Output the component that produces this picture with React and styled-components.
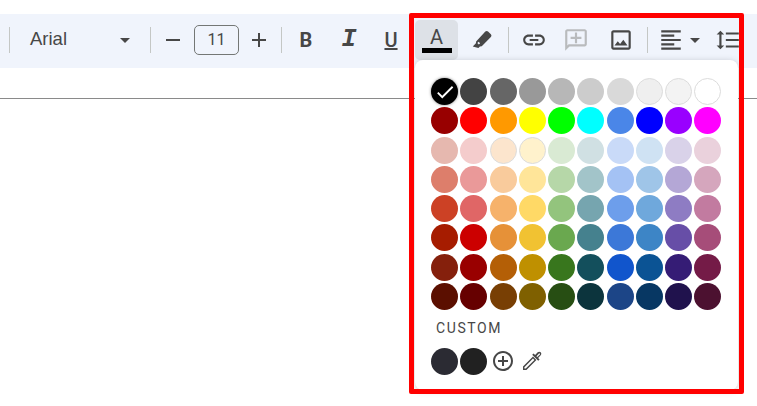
import React from 'react'
import styled, { createGlobalStyle } from 'styled-components'

const Global = createGlobalStyle`
  html, body {
    margin: 0;
    background: #fff;
    font-family: "Roboto", "Liberation Sans", sans-serif;
  }
`

const Page = styled.div`
  position: relative;
  width: 757px;
  height: 406px;
  padding-top: 14px;
  box-sizing: border-box;
  overflow: hidden;
`

const Toolbar = styled.div`
  display: flex;
  align-items: center;
  height: 54px;
  padding-bottom: 2px;
  box-sizing: border-box;
  background: #f0f4fc;
  color: #474747;
  overflow: hidden;
`

const Sep = styled.span`
  flex: none;
  width: 1px;
  height: 26px;
  background: #c4c7c5;
  margin-left: ${p => p.$left}px;
`

const FontName = styled.span`
  flex: none;
  width: 90px;
  margin: 0 0 2px 20px;
  font-family: "Liberation Sans", sans-serif;
  font-size: 18.5px;
`

const Caret = styled.span`
  flex: none;
  width: 0;
  height: 0;
  margin-left: ${p => p.$left}px;
  border-left: 5.5px solid transparent;
  border-right: 5.5px solid transparent;
  border-top: 5.5px solid #474747;
`

const Tool = styled.span`
  flex: none;
  display: flex;
  align-items: center;
  justify-content: center;
  margin-left: ${p => p.$left}px;
  color: ${p => (p.$muted ? '#b9bbbd' : '#474747')};
`

const SizeBox = styled.span`
  flex: none;
  width: 43px;
  height: 28px;
  margin-left: 9px;
  border: 1px solid #747775;
  border-radius: 5px;
  text-align: center;
  line-height: 28px;
  font-size: 16px;
`

const Letter = styled.span`
  flex: none;
  width: 24px;
  margin-left: ${p => p.$left}px;
  text-align: center;
  font-family: ${p => (p.$slab ? '"Liberation Mono", monospace' : '"Roboto", sans-serif')};
  font-size: ${p => (p.$slab ? 25 : 20)}px;
  font-weight: ${p => (p.$thin ? 500 : 700)};
  font-style: ${p => (p.$slab ? 'italic' : 'normal')};
  line-height: 24px;
  text-decoration: ${p => (p.$under ? 'underline' : 'none')};
`

const ColorButton = styled.span`
  flex: none;
  display: flex;
  flex-direction: column;
  align-items: center;
  width: 43px;
  height: 40px;
  margin-left: 12px;
  background: #dde1e7;
  border-radius: 5px;
  font-size: 20px;
  line-height: 22px;
  padding-top: 6px;
  box-sizing: border-box;
`

const ColorBar = styled.span`
  width: 30px;
  height: 5px;
  background: #000;
`

const Rule = styled.div`
  height: 1px;
  margin-top: 30px;
  background: #8a8a8a;
`

const Popup = styled.div`
  position: absolute;
  left: 415px;
  top: 60px;
  width: 323px;
  height: 330px;
  padding: 18px 0 0 16px;
  box-sizing: border-box;
  background: #fff;
  border-radius: 8px;
  box-shadow: 0 1px 6px rgba(60, 64, 67, 0.25);
`

const Palette = styled.div`
  display: grid;
  grid-template-columns: repeat(10, 27px);
  grid-auto-rows: 27px;
  gap: 2.25px;
`

const Swatch = styled.span`
  position: relative;
  display: flex;
  align-items: center;
  justify-content: center;
  border-radius: 50%;
  box-sizing: border-box;
  background: ${p => p.$color};
  border: ${p => (p.$edge ? '1px solid #dcdcdc' : 'none')};
  box-shadow: ${p => (p.$selected ? '0 0 3px rgba(0, 0, 0, 0.5)' : 'none')};
`

const CustomLabel = styled.div`
  margin: 10px 0 0 5px;
  font-size: 14px;
  font-weight: 400;
  letter-spacing: 1.6px;
  line-height: 16px;
  color: #474747;
`

const CustomRow = styled.div`
  display: flex;
  align-items: center;
  margin-top: 12px;
  color: #474747;
`

const CustomDot = styled.span`
  flex: none;
  width: 27px;
  height: 27px;
  margin-right: 2px;
  border-radius: 50%;
  background: ${p => p.$color};
`

const RowIcon = styled.span`
  flex: none;
  display: flex;
  margin-left: ${p => p.$left}px;
`

const Frame = styled.div`
  position: absolute;
  left: 409px;
  top: 13px;
  width: 335px;
  height: 381px;
  box-sizing: border-box;
  border: 5px solid #ff0000;
  border-radius: 2px;
`

const rows = [
  ['#000000', '#434343', '#666666', '#999999', '#b7b7b7', '#cccccc', '#d9d9d9', '#efefef', '#f3f3f3', '#ffffff'],
  ['#980000', '#ff0000', '#ff9900', '#ffff00', '#00ff00', '#00ffff', '#4a86e8', '#0000ff', '#9900ff', '#ff00ff'],
  ['#e6b8af', '#f4cccc', '#fce5cd', '#fff2cc', '#d9ead3', '#d0e0e3', '#c9daf8', '#cfe2f3', '#d9d2e9', '#ead1dc'],
  ['#dd7e6b', '#ea9999', '#f9cb9c', '#ffe599', '#b6d7a8', '#a2c4c9', '#a4c2f4', '#9fc5e8', '#b4a7d6', '#d5a6bd'],
  ['#cc4125', '#e06666', '#f6b26b', '#ffd966', '#93c47d', '#76a5af', '#6d9eeb', '#6fa8dc', '#8e7cc3', '#c27ba0'],
  ['#a61c00', '#cc0000', '#e69138', '#f1c232', '#6aa84f', '#45818e', '#3c78d8', '#3d85c6', '#674ea7', '#a64d79'],
  ['#85200c', '#990000', '#b45f06', '#bf9000', '#38761d', '#134f5c', '#1155cc', '#0b5394', '#351c75', '#741b47'],
  ['#5b0f00', '#660000', '#783f04', '#7f6000', '#274e13', '#0c343d', '#1c4587', '#073763', '#20124d', '#4c1130'],
]

const edged = ['#efefef', '#f3f3f3', '#ffffff', '#fce5cd', '#fff2cc']

const Icon = ({ size = 26, d, children }) => (
  <svg width={size} height={size} viewBox="0 0 24 24" fill="currentColor" fillRule="evenodd">
    {d && <path d={d} />}
    {children}
  </svg>
)

const paths = {
  minus: 'M5 11h14v2H5z',
  plus: 'M19 13h-6v6h-2v-6H5v-2h6V5h2v6h6z',
  // marker body with the white slit near its tip
  marker: 'M16 4.2c.7-.7 1.8-.7 2.5 0l2.6 2.6c.7.7.7 1.8 0 2.5l-8.4 8.4-1.7.2-1.4 1.4-5.2-1.4 2.9-2.9.2-1.7zM9.8 13.6l-1.2 1.2 1.4 1.4 1.2-1.2z',
  link: 'M3.9 12c0-1.71 1.39-3.1 3.1-3.1h4V7H7c-2.76 0-5 2.24-5 5s2.24 5 5 5h4v-1.9H7c-1.71 0-3.1-1.39-3.1-3.1zM8 13h8v-2H8v2zm9-6h-4v1.9h4c1.71 0 3.1 1.39 3.1 3.1s-1.39 3.1-3.1 3.1h-4V17h4c2.76 0 5-2.24 5-5s-2.24-5-5-5z',
  comment: 'M20 2H4c-1.1 0-2 .9-2 2v18l4-4h14c1.1 0 2-.9 2-2V4c0-1.1-.9-2-2-2zm0 14H5.17L4 17.17V4h16v12zM11 5h2v4h4v2h-4v4h-2v-4H7V9h4z',
  image: 'M19 5v14H5V5h14m0-2H5c-1.1 0-2 .9-2 2v14c0 1.1.9 2 2 2h14c1.1 0 2-.9 2-2V5c0-1.1-.9-2-2-2zM14.14 11.86l-3 3.87L9 13.14 6 17h12z',
  align: 'M15 15H3v2h12v-2zm0-8H3v2h12V7zM3 13h18v-2H3v2zm0 8h18v-2H3v2zM3 3v2h18V3H3z',
  spacing: 'M6 7h2.5L5 3.5 1.5 7H4v10H1.5L5 20.5 8.5 17H6V7zm4-2v2h12V5H10zm0 14h12v-2H10v2zm0-6h12v-2H10v2z',
  addCircle: 'M13 7h-2v4H7v2h4v4h2v-4h4v-2h-4V7zm-1-5C6.48 2 2 6.48 2 12s4.48 10 10 10 10-4.48 10-10S17.52 2 12 2zm0 18c-4.41 0-8-3.59-8-8s3.59-8 8-8 8 3.59 8 8-3.59 8-8 8z',
  dropperHead: 'M12.2 5.8l1.4-1.4 1.5 1.5 2.6-2.6c.9-.9 2.2-.9 3 0 .8.8.8 2.1 0 3l-2.6 2.6 1.5 1.5-1.4 1.4zM16.4 7.2l.9.9 2.6-2.6c.3-.3.3-.7 0-.9-.2-.3-.6-.3-.9 0z',
  dropperBody: 'M3 21v-3.4L13 7.6l3.4 3.4L6.4 21zM4.4 18.2v1.4h1.4l8.6-8.6-1.4-1.4z',
}

function App() {
  return (
    <Page>
      <Global />
      <Toolbar>
        <Sep $left={9} />
        <FontName>Arial</FontName>
        <Caret $left={0} />
        <Sep $left={20} />
        <Tool $left={10}><Icon size={24} d={paths.minus} /></Tool>
        <SizeBox>11</SizeBox>
        <Tool $left={8}><Icon size={24} d={paths.plus} /></Tool>
        <Sep $left={10} />
        <Letter $left={12}>B</Letter>
        <Letter $left={19} $slab>I</Letter>
        <Letter $left={18} $under $thin>U</Letter>
        <ColorButton>
          A
          <ColorBar />
        </ColorButton>
        <Tool $left={10}><Icon d={paths.marker} /></Tool>
        <Sep $left={14} />
        <Tool $left={12}><Icon d={paths.link} /></Tool>
        <Tool $left={16} $muted><Icon d={paths.comment} /></Tool>
        <Tool $left={19}><Icon d={paths.image} /></Tool>
        <Sep $left={13} />
        <Tool $left={10}><Icon d={paths.align} /></Tool>
        <Caret $left={6} />
        <Tool $left={15}><Icon d={paths.spacing} /></Tool>
      </Toolbar>
      <Rule />
      <Popup>
        <Palette>
          {rows.flat().map((color, i) => (
            <Swatch key={i} $color={color} $edge={edged.includes(color)} $selected={i === 0}>
              {i === 0 && (
                <svg width="22" height="22" viewBox="0 0 24 24" fill="#fff">
                  <path d="M9 16.17 4.83 12l-1.42 1.41L9 19 21 7l-1.41-1.41z" />
                </svg>
              )}
            </Swatch>
          ))}
        </Palette>
        <CustomLabel>CUSTOM</CustomLabel>
        <CustomRow>
          <CustomDot $color="#2b2b33" />
          <CustomDot $color="#212121" />
          <RowIcon $left={2}><Icon size={24} d={paths.addCircle} /></RowIcon>
          <RowIcon $left={5}>
            <Icon size={24}>
              <path d={paths.dropperHead} />
              <path d={paths.dropperBody} />
            </Icon>
          </RowIcon>
        </CustomRow>
      </Popup>
      <Frame />
    </Page>
  )
}

export default App
